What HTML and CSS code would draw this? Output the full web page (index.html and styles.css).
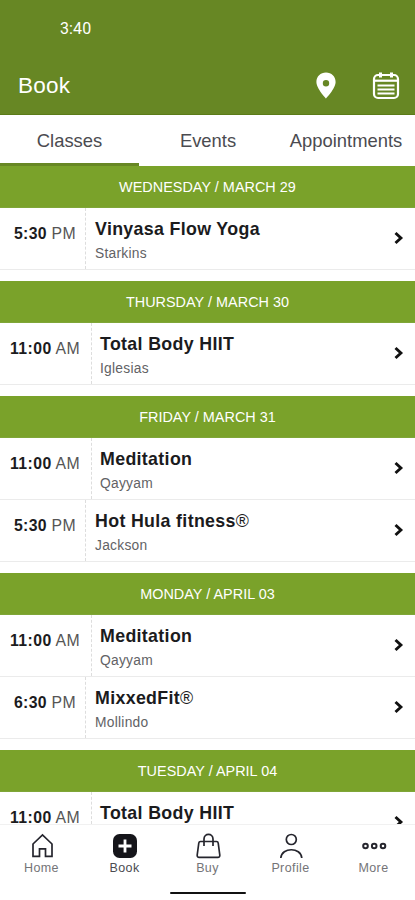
FILE: index.html
```html
<!DOCTYPE html>
<html lang="en">
<head>
<meta charset="utf-8">
<meta name="viewport" content="width=device-width">
<title>Book</title>
<link rel="stylesheet" href="styles.css">
</head>
<body>
<svg class="defs" width="0" height="0"><symbol id="chevron" viewBox="0 0 12 14"><path d="M2.500 2 7.900 7 2.500 12" fill="none" stroke="#111" stroke-width="2.900"/></symbol></svg>
<div class="app">
  <header class="top">
    <div class="status">3:40</div>
    <div class="bar">
      <h1>Book</h1>
      <svg class="pin" width="20" height="27" viewBox="0 0 20 27"><path fill="#fff" fill-rule="evenodd" d="M10 .5C4.500.5.4 4.600.4 10c0 6.600 9.600 16.500 9.600 16.500S19.600 16.600 19.600 10C19.600 4.600 15.500.5 10 .5ZM10 8a3.200 3.200 0 1 1 0 6.400A3.200 3.200 0 0 1 10 8Z"/></svg>
      <svg class="cal" width="28" height="28" viewBox="0 0 28 28" fill="none" stroke="#fff" stroke-width="2.200"><rect x="2" y="3" width="24" height="23" rx="4"/><path stroke-width="3" d="M8.500 .5v5M19.500 .5v5"/><path d="M2 8.700h24"/><path stroke-width="1.900" d="M5.500 13.500h17M5.500 17.500h17M5.500 21.500h17"/></svg>
    </div>
  </header>
  <nav class="tabs"><a class="active">Classes</a><a>Events</a><a>Appointments</a></nav>
  <main>
    <section>
      <h2>WEDNESDAY / MARCH 29</h2>
      <div class="row pm"><div class="time"><b>5:30</b> PM</div><div class="info"><h3>Vinyasa Flow Yoga</h3><p>Starkins</p></div><svg class="chev"><use href="#chevron"/></svg></div>
    </section>
    <section>
      <h2>THURSDAY / MARCH 30</h2>
      <div class="row"><div class="time"><b>11:00</b> AM</div><div class="info"><h3>Total Body HIIT</h3><p>Iglesias</p></div><svg class="chev"><use href="#chevron"/></svg></div>
    </section>
    <section>
      <h2>FRIDAY / MARCH 31</h2>
      <div class="row"><div class="time"><b>11:00</b> AM</div><div class="info"><h3>Meditation</h3><p>Qayyam</p></div><svg class="chev"><use href="#chevron"/></svg></div>
      <div class="row pm"><div class="time"><b>5:30</b> PM</div><div class="info"><h3>Hot Hula fitness<span>®</span></h3><p>Jackson</p></div><svg class="chev"><use href="#chevron"/></svg></div>
    </section>
    <section>
      <h2>MONDAY / APRIL 03</h2>
      <div class="row"><div class="time"><b>11:00</b> AM</div><div class="info"><h3>Meditation</h3><p>Qayyam</p></div><svg class="chev"><use href="#chevron"/></svg></div>
      <div class="row pm"><div class="time"><b>6:30</b> PM</div><div class="info"><h3>MixxedFit<span>®</span></h3><p>Mollindo</p></div><svg class="chev"><use href="#chevron"/></svg></div>
    </section>
    <section>
      <h2>TUESDAY / APRIL 04</h2>
      <div class="row"><div class="time"><b>11:00</b> AM</div><div class="info"><h3>Total Body HIIT</h3></div><svg class="chev"><use href="#chevron"/></svg></div>
    </section>
  </main>
  <footer>
    <nav class="bottom">
      <a><svg viewBox="0 0 28 28"><path d="M5 12 14.500 3 24 12V24.300h-6.500v-7.500h-6v7.500H5Z"/></svg>Home</a>
      <a class="current"><svg viewBox="0 0 28 28"><rect x="2" y="2" width="24" height="24" rx="6.500" fill="#15151a" stroke="none"/><path d="M14 7.500v13M7.500 14h13" stroke="#fff" stroke-width="2.800"/></svg>Book</a>
      <a><svg viewBox="0 0 28 28"><path d="M6.500 9.500h16q1.500 0 1.700 1.500l1.600 12q.2 2.300-2 2.300H5.200q-2.200 0-2-2.300l1.600-12q.2-1.500 1.700-1.500ZM10 14V7C10 .8 19 .8 19 7V14"/></svg>Buy</a>
      <a><svg viewBox="0 0 28 28"><circle cx="14.300" cy="7.500" r="5"/><path d="M3.800 26c1-11 20-11 21 0"/></svg>Profile</a>
      <a><svg class="dots" viewBox="0 0 28 28"><circle cx="5.500" cy="14" r="2.300"/><circle cx="14.200" cy="14" r="2.300"/><circle cx="23" cy="14" r="2.300"/></svg>More</a>
    </nav>
    <div class="handle"></div>
  </footer>
</div>
</body>
</html>
```
FILE: styles.css
```css
* { box-sizing: border-box; }
body { margin: 0; background: #fff; font-family: "Liberation Sans", Arial, sans-serif; color: #1b1b1d; }
h1, h2, h3, p { margin: 0; font-weight: 400; }
.defs { display: block; }
.app { height: 900px; display: flex; flex-direction: column; overflow: hidden; }
.top { height: 115px; flex: none; background: #678724; color: #fff; border-bottom: 1px solid #5b7b18; }
.status { height: 57px; padding: 19px 0 0 60px; font: 16px/19px Roboto, sans-serif; letter-spacing: .1px; }
.bar { height: 57px; display: flex; align-items: center; padding: 0 15px 0 18px; }
h1 { font-size: 22.500px; letter-spacing: .2px; flex: 1; }
.pin { margin-right: 36px; }
.tabs { height: 51px; flex: none; display: grid; grid-template-columns: 139px 138px 138px; }
.tabs a { text-align: center; font-size: 18.400px; line-height: 51px; color: #4b4b50; white-space: nowrap; }
.tabs .active { box-shadow: inset 0 -3px #678724; }
main { flex: 1; min-height: 0; overflow: hidden; }
section { padding-bottom: 11px; }
h2 { height: 42px; background: #7aa22a; color: #fff; text-align: center; font-size: 14.400px; line-height: 42px; letter-spacing: .03px; border-bottom: 1px solid #7fa638; }
.row { height: 62px; display: flex; border-bottom: 1px solid #ebebeb; }
.time { width: 92px; flex: none; padding: 16px 0 0 10px; font-size: 15.800px; line-height: 20px; letter-spacing: .42px; color: #555; border-right: 1px dashed #ddd; white-space: nowrap; }
.time b { color: #1b1b1d; }
.pm .time { width: 86px; padding-left: 14px; letter-spacing: .32px; }
.info { flex: 1; padding: 10px 0 0 8px; white-space: nowrap; }
.pm .info { padding-left: 9px; }
h3 { font-size: 17.800px; line-height: 22px; font-weight: 700; letter-spacing: .34px; }
h3 span { font-weight: 400; }
.info p { font-size: 13.800px; line-height: 18px; margin-top: 5px; letter-spacing: .26px; color: #626265; }
.chev { width: 12px; height: 14px; margin: 23px 10px 0 0; }
footer { height: 76px; flex: none; border-top: 1px solid #f1f1f1; background: #fff; }
.bottom { height: 67px; display: grid; grid-template-columns: repeat(5, 1fr); }
.bottom a { display: flex; flex-direction: column; align-items: center; font-size: 12.500px; line-height: 14px; letter-spacing: .4px; color: #747477; padding-top: 7px; }
.bottom svg { width: 28px; height: 28px; margin-bottom: 1px; fill: none; stroke: #25252d; stroke-width: 1.700; }
.bottom .dots { stroke-width: 2; }
.bottom .current { color: #4b4b50; }
.handle { width: 76px; height: 2px; margin: 0 auto; border-radius: 1px; background: #111; }
```
